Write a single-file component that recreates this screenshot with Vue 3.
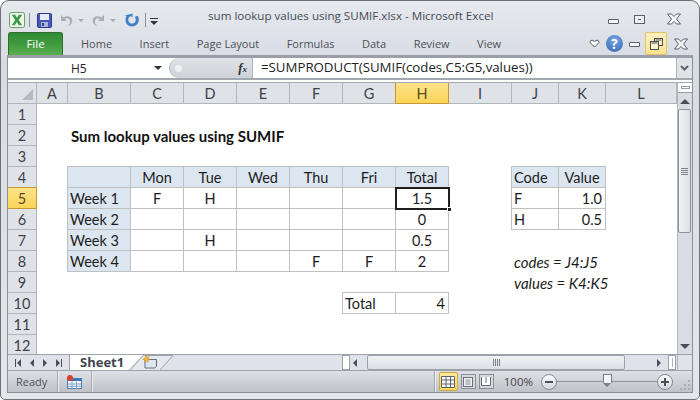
<template>
  <div class="window">
    <header class="titlebar">
      <div class="qat">
        <svg class="ico-excel" width="16" height="16" viewBox="0 0 17 17">
          <rect x="0.5" y="0.5" width="16" height="16" rx="2" fill="#eef5ea" stroke="#5f9a5a" />
          <path d="M3 3h3.500l2 3.200L10.500 3H14l-3.700 5.500L14 14h-3.500L8.300 10.600 6.200 14H3l3.600-5.500z" fill="#3c9a48" />
        </svg>
        <i class="qat-sep"></i>
        <svg class="ico-save" width="15" height="15" viewBox="0 0 15 15">
          <rect x="0.5" y="0.5" width="14" height="14" rx="1" fill="#4a58b8" stroke="#2d3a8c" />
          <rect x="3" y="1" width="9" height="6" fill="#e8ecf8" />
          <rect x="4" y="9" width="7" height="5" fill="#aab4dc" />
          <rect x="5" y="10" width="2" height="3" fill="#3a468f" />
        </svg>
        <svg class="ico-undo" width="13" height="13" viewBox="0 0 13 13">
          <path d="M1 1v6h6L5 5c2-1.500 4.500-.5 5 2 .3 2-.8 3.800-2.500 4.800 3.200-.3 5-3 4.800-5.600C12 2.600 7.500 .8 3.500 3.500z" fill="#a9aeb6" />
        </svg>
        <i class="drop muted"></i>
        <svg class="ico-redo" width="13" height="13" viewBox="0 0 13 13">
          <path d="M12 1v6H6l2-2C6 3.500 3.500 4.500 3 7c-.3 2 .8 3.800 2.500 4.800C2.300 11.500.5 8.800.7 6.200 1 2.600 5.500 .8 9.500 3.500z" fill="#a9aeb6" />
        </svg>
        <i class="drop muted"></i>
        <svg class="ico-repeat" width="14" height="14" viewBox="0 0 14 14">
          <path d="M7.500 0.500v4l-2 -1.500C3.500 4 3 6 3.300 7.500 3.800 10 6 11 8 10.500c2-.5 3-2.500 2.700-4.500L10 3.500 13 3c1 2.500 1.200 5.500-.5 7.800C10.500 13.500 6.500 14.300 3.500 12.500 .5 10.700-.4 6.500 1.500 3.500L0 2.500z" fill="#3f7fc8" />
        </svg>
        <i class="qat-sep sep-last"></i>
        <span class="qat-custom"><i class="dash"></i><i class="drop dark"></i></span>
      </div>
      <div class="doc-title">sum lookup values using SUMIF.xlsx  -  Microsoft Excel</div>
      <div class="win-btns">
        <i class="btn-min"></i>
        <i class="btn-max"><b></b></i>
        <svg width="16" height="12" viewBox="0 0 16 12">
          <path d="M1.500 1h4L8 3.500 10.500 1h4L10.500 6l4 5h-4L8 8.500 5.500 11h-4l4-5z" fill="#f4f5f7" stroke="#5b6068" />
        </svg>
      </div>
    </header>

    <nav class="ribbon">
      <div class="tab-file">File</div>
      <div class="tabs">
        <span v-for="tab in tabs" :key="tab">{{ tab }}</span>
      </div>
      <div class="ribbon-btns">
        <svg width="11" height="9" viewBox="0 0 11 9">
          <path d="M1 2.500 3 1l2.500 1.500L8 1l2 1.500v1L5.500 8 1 3.500z" fill="#fff" stroke="#555b63" />
        </svg>
        <div class="help">?</div>
        <i class="rb-min"></i>
        <div class="rb-restore">
          <svg width="13" height="13" viewBox="0 0 13 13">
            <rect x="4.500" y="1.500" width="8" height="7" fill="#fdf3c8" stroke="#4a4f58" />
            <rect x="5.500" y="2.500" width="6" height="1" fill="#4a4f58" />
            <rect x="0.500" y="4.500" width="8" height="8" fill="#fdf3c8" stroke="#4a4f58" />
            <rect x="1.500" y="5.500" width="6" height="1" fill="#4a4f58" />
          </svg>
        </div>
        <svg width="16" height="12" viewBox="0 0 16 12">
          <path d="M1.500 1h4L8 3.500 10.500 1h4L10.500 6l4 5h-4L8 8.500 5.500 11h-4l4-5z" fill="#f4f5f7" stroke="#5b6068" />
        </svg>
      </div>
    </nav>

    <section class="workspace">
      <div class="formula-bar">
        <div class="name-box">
          <span>H5</span>
          <i class="drop dark"></i>
        </div>
        <div class="fx-zone">
          <i class="grip-round"></i>
          <em class="fx">f<small>x</small></em>
        </div>
        <div class="formula">=SUMPRODUCT(SUMIF(codes,C5:G5,values))</div>
        <div class="formula-expand">
          <svg width="9" height="6" viewBox="0 0 9 6"><path d="M1 1l3.500 3.500L8 1" fill="none" stroke="#5d636b" stroke-width="2" /></svg>
        </div>
      </div>

      <div class="sheet-area">
        <div class="sheet">
          <div class="corner"><i></i></div>
          <div
            v-for="col in columns"
            :key="col"
            class="col-head"
            :class="{ active: col === 'H' }"
          >{{ col }}</div>
          <template v-for="row in rows" :key="row">
            <div class="row-head" :class="{ active: row === 5 }">{{ row }}</div>
            <div
              v-for="col in columns"
              :key="col + row"
              class="cell"
              :class="cellAt(col, row).cls"
            >
              <span>{{ cellAt(col, row).text }}</span>
              <div v-if="col === 'H' && row === 5" class="selection"><i></i></div>
            </div>
          </template>
        </div>

        <aside class="vscroll">
          <div class="split-v"><i></i></div>
          <div class="arrow-btn"><i class="tri-up"></i></div>
          <div class="vthumb"><b></b><b></b><b></b><b></b></div>
          <div class="vtrack"></div>
          <div class="arrow-btn"><i class="tri-down"></i></div>
        </aside>
      </div>

      <div class="tabbar">
        <div class="tab-nav">
          <svg width="6" height="8" viewBox="0 0 6 8"><path d="M0 0h1v8H0zM6 0v8L2 4z" fill="#4a4f58" /></svg>
          <i class="tri-left"></i>
          <i class="tri-right"></i>
          <svg width="6" height="8" viewBox="0 0 6 8"><path d="M5 0h1v8H5zM0 0v8l4-4z" fill="#4a4f58" /></svg>
        </div>
        <div class="sheet-tab">Sheet1</div>
        <div class="new-tab">
          <svg class="new-shape" width="43" height="15" viewBox="0 0 43 15">
            <path d="M0.500 15 13 0.500h30L30 15" fill="#e6e9ee" stroke="#9da2a9" />
          </svg>
          <svg class="new-ico" width="16" height="14" viewBox="0 0 16 14">
            <path d="M3 4.500h11.500v7L12.500 13H3z" fill="#dfe6f0" stroke="#5f6d80" />
            <path d="M4 0.500l1 2 2-1-1 2 2 1-2.200.6.700 2.200-2-1.200L2.500 7.300l.4-2.300L.6 4.200l2.200-.8z" fill="#f4b63c" stroke="#c98a1e" stroke-width="0.5" />
          </svg>
        </div>
        <div class="tab-rest"></div>
        <i class="split-h"></i>
        <div class="hscroll">
          <i class="tri-left"></i>
          <div class="hthumb"><b></b><b></b><b></b><b></b></div>
          <i class="tri-right"></i>
          <i class="split-r"><b></b></i>
        </div>
        <div class="scroll-corner"></div>
      </div>

      <footer class="statusbar">
        <span class="ready">Ready</span>
        <i class="st-sep"></i>
        <svg class="macro" width="16" height="14" viewBox="0 0 16 14">
          <rect x="1.500" y="3.500" width="14" height="10" fill="#f4f7fb" stroke="#4f7fb5" />
          <rect x="1" y="3" width="15" height="3" fill="#3b78bd" />
          <path d="M6 6.500v7M10.500 6.500v7M2 9h13M2 11.300h13" stroke="#7ea3cc" />
          <circle cx="4" cy="3" r="3" fill="#d9412e" />
        </svg>
        <i class="st-sep second"></i>
        <div class="st-right">
          <i class="st-sep"></i>
          <div class="view-btn on">
            <svg width="14" height="12" viewBox="0 0 14 12">
              <path d="M.5.500h13v11H.500zM.5 4h13M.5 8h13M5 .5v11M9.500.5v11" fill="#fff" stroke="#5c6068" />
            </svg>
          </div>
          <div class="view-btn">
            <svg width="12" height="12" viewBox="0 0 12 12">
              <rect x="1.500" y="1.500" width="9" height="9" fill="#eef0f3" stroke="#6a6e75" />
              <path d="M3.500 4h5M3.500 6h5M3.500 8h5" stroke="#8a8e95" />
            </svg>
          </div>
          <div class="view-btn">
            <svg width="12" height="12" viewBox="0 0 12 12">
              <path d="M1.500 1v8.500h9V1M6 1v6" fill="#fff" stroke="#6a6e75" />
            </svg>
          </div>
          <span class="zoom-val">100%</span>
          <div class="zoom-circle"><i class="minus"></i></div>
          <div class="slider"><i class="slider-thumb"></i></div>
          <div class="zoom-circle"><i class="minus"></i><i class="plus"></i></div>
          <div class="grip">
            <i v-for="dot in gripDots" :key="dot" :style="{ gridArea: dot }"></i>
          </div>
        </div>
      </footer>
    </section>
  </div>
</template>

<script setup>
const tabs = ['Home', 'Insert', 'Page Layout', 'Formulas', 'Data', 'Review', 'View']
const columns = ['A', 'B', 'C', 'D', 'E', 'F', 'G', 'H', 'I', 'J', 'K', 'L']
const rows = [1, 2, 3, 4, 5, 6, 7, 8, 9, 10, 11, 12]
const gripDots = ['1 / 3', '2 / 2', '2 / 3', '3 / 1', '3 / 2', '3 / 3']

const cells = {
  B2: { text: 'Sum lookup values using SUMIF', cls: 'bold' },
  J8: { text: 'codes = J4:J5', cls: 'ital' },
  J9: { text: 'values = K4:K5', cls: 'ital' }
}

// main table
const table = [
  ['', 'Mon', 'Tue', 'Wed', 'Thu', 'Fri', 'Total'],
  ['Week 1', 'F', 'H', '', '', '', '1.5'],
  ['Week 2', '', '', '', '', '', '0'],
  ['Week 3', '', 'H', '', '', '', '0.5'],
  ['Week 4', '', '', '', 'F', 'F', '2']
]
table.forEach((line, r) => {
  line.forEach((text, c) => {
    const isHead = r === 0 || c === 0
    cells[columns[c + 1] + (r + 4)] = {
      text,
      cls: ['box', isHead ? 'head' : '', c === 0 ? 'left' : 'mid']
    }
  })
})

// code table
cells.J4 = { text: 'Code', cls: ['box', 'head', 'left'] }
cells.K4 = { text: 'Value', cls: ['box', 'head', 'mid'] }
cells.J5 = { text: 'F', cls: ['box', 'left'] }
cells.K5 = { text: '1.0', cls: ['box', 'right'] }
cells.J6 = { text: 'H', cls: ['box', 'left'] }
cells.K6 = { text: '0.5', cls: ['box', 'right'] }

cells.G10 = { text: 'Total', cls: ['box', 'left'] }
cells.H10 = { text: '4', cls: ['box', 'right'] }

const empty = { text: '', cls: '' }
const cellAt = (col, row) => cells[col + row] || empty
</script>

<style>
html, body {
  margin: 0;
  background: #fff;
}
</style>

<style scoped>
.window {
  width: 700px;
  height: 400px;
  box-sizing: border-box;
  border: 1px solid #6e7075;
  border-radius: 9px 9px 5px 5px;
  background: linear-gradient(#e6e9ee, #d8dce3 60px, #e3e6eb);
  overflow: hidden;
  font-family: "Open Sans", "Liberation Sans", sans-serif;
  color: #3f4650;
}

.titlebar {
  height: 30px;
  display: flex;
  align-items: flex-start;
}

.qat {
  width: 207px;
  flex: none;
  box-sizing: border-box;
  padding: 10px 0 0 8px;
  display: flex;
  align-items: center;
  height: 28px;
}

.qat-sep {
  width: 1px;
  height: 14px;
  margin: 0 7px 0 4px;
  background: #8b9097;
}

.ico-undo { margin-left: 8px; }
.ico-redo { margin-left: 8px; }
.ico-repeat { margin-left: 9px; }
.sep-last { margin: 0 4px 0 6px; height: 14px; }

.drop {
  width: 0;
  height: 0;
  border: 4px solid transparent;
  border-top-color: #333;
  border-bottom-width: 0;
  display: block;
}
.drop.muted {
  border-top-color: #a6abb2;
  border-width: 3px 3px 0;
  margin-left: 5px;
}

.qat-custom {
  display: flex;
  flex-direction: column;
  gap: 2px;
  align-items: center;
  margin-top: 3px;
}
.dash {
  width: 8px;
  height: 1px;
  background: #333;
}

.doc-title {
  padding-top: 6px;
  font-size: 11.600px;
  line-height: 17px;
  color: #454b54;
  white-space: pre;
}

.win-btns {
  margin-left: auto;
  width: 92px;
  display: flex;
  align-items: center;
  padding-top: 12px;
  padding-right: 17px;
  box-sizing: border-box;
  justify-content: space-between;
}
.btn-min {
  width: 9px;
  height: 3px;
  margin: 4px 0 0 1px;
  background: #f6f7f9;
  border: 1px solid #5b6068;
  border-radius: 1px;
}
.btn-max {
  width: 9px;
  height: 7px;
  margin-right: 6px;
  border: 1px solid #5b6068;
  background: #eef0f3;
  display: grid;
  place-items: center;
}
.btn-max b {
  width: 3px;
  height: 1px;
  background: #5b6068;
}

.ribbon {
  height: 24px;
  display: flex;
  align-items: flex-end;
}
.tab-file {
  width: 55px;
  height: 23px;
  margin-left: 7px;
  border-radius: 3px 3px 0 0;
  border: 1px solid #2f6e2f;
  border-bottom: 0;
  box-sizing: border-box;
  background: linear-gradient(#2f8a35, #3f9a3f 50%, #5bb04f);
  color: #fff;
  font-size: 11.500px;
  line-height: 22px;
  text-align: center;
}
.tabs {
  display: flex;
  gap: 27.500px;
  margin-left: 18px;
  height: 23px;
  align-items: center;
  font-size: 11px;
  color: #4c5059;
}
.ribbon-btns {
  margin-left: auto;
  width: 110px;
  height: 23px;
  box-sizing: border-box;
  padding-right: 10px;
  display: flex;
  align-items: center;
  justify-content: space-between;
}
.help {
  width: 17px;
  height: 17px;
  border-radius: 50%;
  background: radial-gradient(circle at 50% 30%, #7ba7e0, #2e66b6);
  color: #fff;
  font: bold 14px/17px "Open Sans", sans-serif;
  text-align: center;
}
.rb-min {
  width: 9px;
  height: 3px;
  background: #f6f7f9;
  border: 1px solid #5b6068;
  border-radius: 1px;
  margin-top: 2px;
}
.rb-restore {
  width: 20px;
  height: 21px;
  border: 1px solid #e5c365;
  border-radius: 2px;
  background: linear-gradient(#fdf1c0, #fbe38e);
  display: grid;
  place-items: center;
}

.workspace {
  box-sizing: border-box;
  margin: 0 6px 0 6px;
  height: 338px;
  border: 1px solid #8c9198;
  border-top: 3px solid #9a9ea6;
  background: #fff;
  display: flex;
  flex-direction: column;
}

.formula-bar {
  height: 22px;
  box-sizing: border-box;
  flex: none;
  display: flex;
  border-bottom: 2px solid #a3a8af;
  background: #fff;
}
.name-box {
  width: 161px;
  display: flex;
  align-items: center;
  font-size: 12px;
  color: #222;
  padding-right: 7px;
  box-sizing: border-box;
  justify-content: space-between;
}
.name-box span {
  margin-left: 63px;
}
.fx-zone {
  width: 84px;
  background: linear-gradient(#dfe2e7, #cfd3d9);
  border-radius: 12px 0 0 12px;
  border-left: 1px solid #b0b5bc;
  border-right: 1px solid #b0b5bc;
  box-sizing: border-box;
  display: flex;
  align-items: center;
  justify-content: space-between;
  padding: 0 5px;
}
.grip-round {
  width: 7px;
  height: 7px;
  border-radius: 50%;
  background: #eef0f3;
}
.fx {
  font: italic bold 13px "Liberation Serif", serif;
  color: #333;
}
.fx small {
  font-size: 9px;
}
.formula {
  flex: 1;
  padding-left: 8px;
  font-size: 13.250px;
  line-height: 19px;
  color: #222;
  white-space: nowrap;
}
.formula-expand {
  width: 15px;
  background: #dfe2e7;
  border-left: 1px solid #b0b5bc;
  display: grid;
  place-items: center;
}

.sheet-area {
  flex: none;
  box-sizing: border-box;
  height: 272px;
  margin-top: 2px;
  border-top: 1px solid #a3a8af;
  display: flex;
  overflow: hidden;
}

.sheet {
  width: 669px;
  display: grid;
  grid-template-columns: 29px 31px 63px 53px 53px 53px 53px 53px 53px 63px 47px 47px 71px;
  grid-auto-rows: 21px;
  font-family: Lato, "Liberation Sans", sans-serif;
  font-size: 14.500px;
  color: #1c1c1c;
}

.corner,
.col-head,
.row-head {
  box-sizing: border-box;
  background: #dfe3e8;
  border-right: 1px solid #b1b6bd;
  border-bottom: 1px solid #b1b6bd;
  text-align: center;
  line-height: 22px;
  color: #3d4148;
  font-size: 14.500px;
}
.corner {
  position: relative;
}
.corner i {
  position: absolute;
  right: 3px;
  bottom: 3px;
  border-style: solid;
  border-width: 0 0 11px 11px;
  border-color: transparent transparent #b6bac0 transparent;
}
.col-head.active,
.row-head.active {
  background: linear-gradient(#fde38a, #fbd558);
  border-color: #c8973a;
  color: #5a4a25;
}
.col-head.active {
  border-left: 1px solid #c8973a;
  margin-left: -1px;
}
.row-head.active {
  border-top: 1px solid #c8973a;
  margin-top: -1px;
}

.cell {
  position: relative;
  margin: 0 1px 1px 0;
  line-height: 22px;
  min-width: 0;
  white-space: nowrap;
}
.cell.bold {
  font-size: 15px;
  font-weight: 700;
  padding-left: 3px;
  color: #111;
}
.cell.ital {
  font-size: 15px;
  font-style: italic;
  padding-left: 2px;
}
.cell.box {
  box-shadow: 0 0 0 1px #bfc0c2;
}
.cell.head {
  background: #dce6f1;
}
.cell.left {
  padding-left: 2px;
  text-align: left;
}
.cell.mid {
  text-align: center;
}
.cell.right {
  padding-right: 3px;
  text-align: right;
}

.selection {
  position: absolute;
  inset: -1px -2px -2px -1px;
  border: 2px solid #1f1f1f;
  z-index: 2;
}
.selection i {
  position: absolute;
  right: -4px;
  bottom: -4px;
  width: 5px;
  height: 5px;
  background: #1f1f1f;
  border: 1px solid #fff;
  box-sizing: border-box;
}

.vscroll {
  width: 15px;
  flex: none;
  background: #d9dde3;
  display: flex;
  flex-direction: column;
  border-left: 1px solid #b1b6bd;
  box-sizing: border-box;
}
.split-v {
  height: 9px;
  background: #fff;
  border-bottom: 1px solid #9a9ea6;
  display: grid;
  place-items: center;
}
.split-v i {
  width: 9px;
  height: 3px;
  border: 1px solid #9a9ea6;
  box-sizing: border-box;
}
.arrow-btn {
  height: 16px;
  display: grid;
  place-items: center;
}
.tri-up,
.tri-down {
  width: 0;
  height: 0;
  border: 5px solid transparent;
  border-top-width: 0;
  border-bottom: 5px solid #4a4f58;
}
.tri-down {
  border-top: 5px solid #4a4f58;
  border-bottom-width: 0;
}
.vthumb {
  height: 124px;
  flex: none;
  box-sizing: border-box;
  margin-right: 1px;
  border: 1px solid #8f949b;
  border-radius: 2px;
  background: linear-gradient(90deg, #f0f2f5, #dcdfe5);
  display: flex;
  flex-direction: column;
  justify-content: center;
  align-items: center;
  gap: 1px;
}
.vthumb b {
  width: 7px;
  height: 1px;
  background: #7e838b;
}
.vtrack {
  flex: 1;
}

.tabbar {
  flex: none;
  height: 17px;
  box-sizing: border-box;
  display: flex;
  align-items: center;
  background: #dfe3e9;
  border-top: 1px solid #9da2a9;
  border-bottom: 1px solid #9da2a9;
}
.tab-nav {
  width: 62px;
  height: 15px;
  flex: none;
  display: flex;
  align-items: center;
  justify-content: space-around;
  padding: 0 3px;
  box-sizing: border-box;
  border-right: 1px solid #9da2a9;
}
.tri-left,
.tri-right {
  width: 0;
  height: 0;
  border: 4px solid transparent;
  border-left-width: 0;
  border-right: 4px solid #4a4f58;
  display: block;
}
.tri-right {
  border-left: 4px solid #4a4f58;
  border-right-width: 0;
}
.sheet-tab {
  width: 73px;
  height: 15px;
  flex: none;
  box-sizing: border-box;
  padding-left: 10px;
  background: #fff;
  font-size: 13px;
  font-weight: 700;
  line-height: 15px;
  color: #3f4650;
  clip-path: polygon(0 0, 100% 0, 79% 100%, 0 100%);
}
.new-tab {
  position: relative;
  width: 43px;
  height: 15px;
  margin-left: -13px;
  flex: none;
}
.new-shape {
  position: absolute;
  left: 0;
  top: 0;
}
.new-ico {
  position: absolute;
  left: 12px;
  top: 0;
}
.tab-rest {
  flex: 1;
}
.split-h {
  width: 6px;
  height: 13px;
  flex: none;
  background: #fff;
  border: 1px solid #9da2a9;
}
.hscroll {
  width: 327px;
  height: 15px;
  flex: none;
  display: flex;
  align-items: center;
  padding-left: 3px;
  box-sizing: border-box;
}
.hthumb {
  width: 258px;
  height: 15px;
  flex: none;
  margin-left: 10px;
  box-sizing: border-box;
  border: 1px solid #9da2a9;
  border-radius: 2px;
  background: linear-gradient(#f0f2f5, #dcdfe5);
  display: flex;
  align-items: center;
  justify-content: center;
  gap: 1px;
}
.hthumb b {
  width: 1px;
  height: 7px;
  background: #7e838b;
}
.hscroll .tri-right {
  margin-left: 32px;
}
.split-r {
  width: 6px;
  height: 13px;
  flex: none;
  margin-left: 7px;
  background: #fff;
  border: 1px solid #9da2a9;
  display: grid;
  place-items: center;
}
.split-r b {
  width: 1px;
  height: 9px;
  background: #b0b5bc;
}
.scroll-corner {
  width: 15px;
  height: 15px;
  flex: none;
  box-sizing: border-box;
  border-left: 1px solid #b1b6bd;
  background: #e0e3e8;
}

.statusbar {
  flex: 1;
  min-height: 0;
  display: flex;
  align-items: center;
  background: linear-gradient(#dde0e5, #bfc3c9);
  font-size: 11px;
  color: #4c5059;
}
.ready {
  margin-left: 8px;
  width: 41px;
}
.st-sep {
  width: 1px;
  height: 21px;
  background: #a3a7ad;
  box-shadow: 1px 0 0 #eceef1;
}
.macro {
  margin: 0 9px 0 8px;
}
.st-right {
  margin-left: auto;
  display: flex;
  align-items: center;
}
.view-btn {
  width: 15px;
  height: 15px;
  margin-left: 3px;
  display: grid;
  place-items: center;
  background: #d6d9de;
  border: 1px solid #8a8e95;
  box-sizing: border-box;
}
.view-btn.on {
  width: 19px;
  height: 19px;
  margin-left: 4px;
  background: linear-gradient(#fde9a0, #fbd660);
  border: 1px solid #d8a63f;
  border-radius: 2px;
}
.zoom-val {
  margin: 0 8px 0 10px;
  font-size: 11.500px;
  color: #4c3f4a;
}
.zoom-circle {
  position: relative;
  width: 16px;
  height: 16px;
  border-radius: 50%;
  background: linear-gradient(#fbfbfc, #d5d8dd);
  border: 1px solid #84888f;
  box-sizing: border-box;
  flex: none;
}
.minus,
.plus {
  position: absolute;
  left: 3px;
  top: 6px;
  width: 8px;
  height: 2px;
  background: #4a4f58;
}
.plus {
  left: 6px;
  top: 3px;
  width: 2px;
  height: 8px;
}
.slider {
  position: relative;
  width: 100px;
  height: 1px;
  background: #9094a0;
}
.slider-thumb {
  position: absolute;
  left: 46px;
  top: -7px;
  width: 9px;
  height: 9px;
  background: #f3f4f6;
  border: 1px solid #797d84;
  box-sizing: border-box;
  border-bottom: 0;
}
.slider-thumb::after {
  content: "";
  position: absolute;
  left: -1px;
  top: 8px;
  border-style: solid;
  border-width: 4px 4.500px 0;
  border-color: #797d84 transparent transparent;
}
.grip {
  width: 11px;
  height: 10px;
  margin: 6px 1px 0 7px;
  display: grid;
  grid-template-columns: repeat(3, 2px);
  grid-template-rows: repeat(3, 2px);
  gap: 2px;
}
.grip i {
  background: #a9adb3;
}
</style>
